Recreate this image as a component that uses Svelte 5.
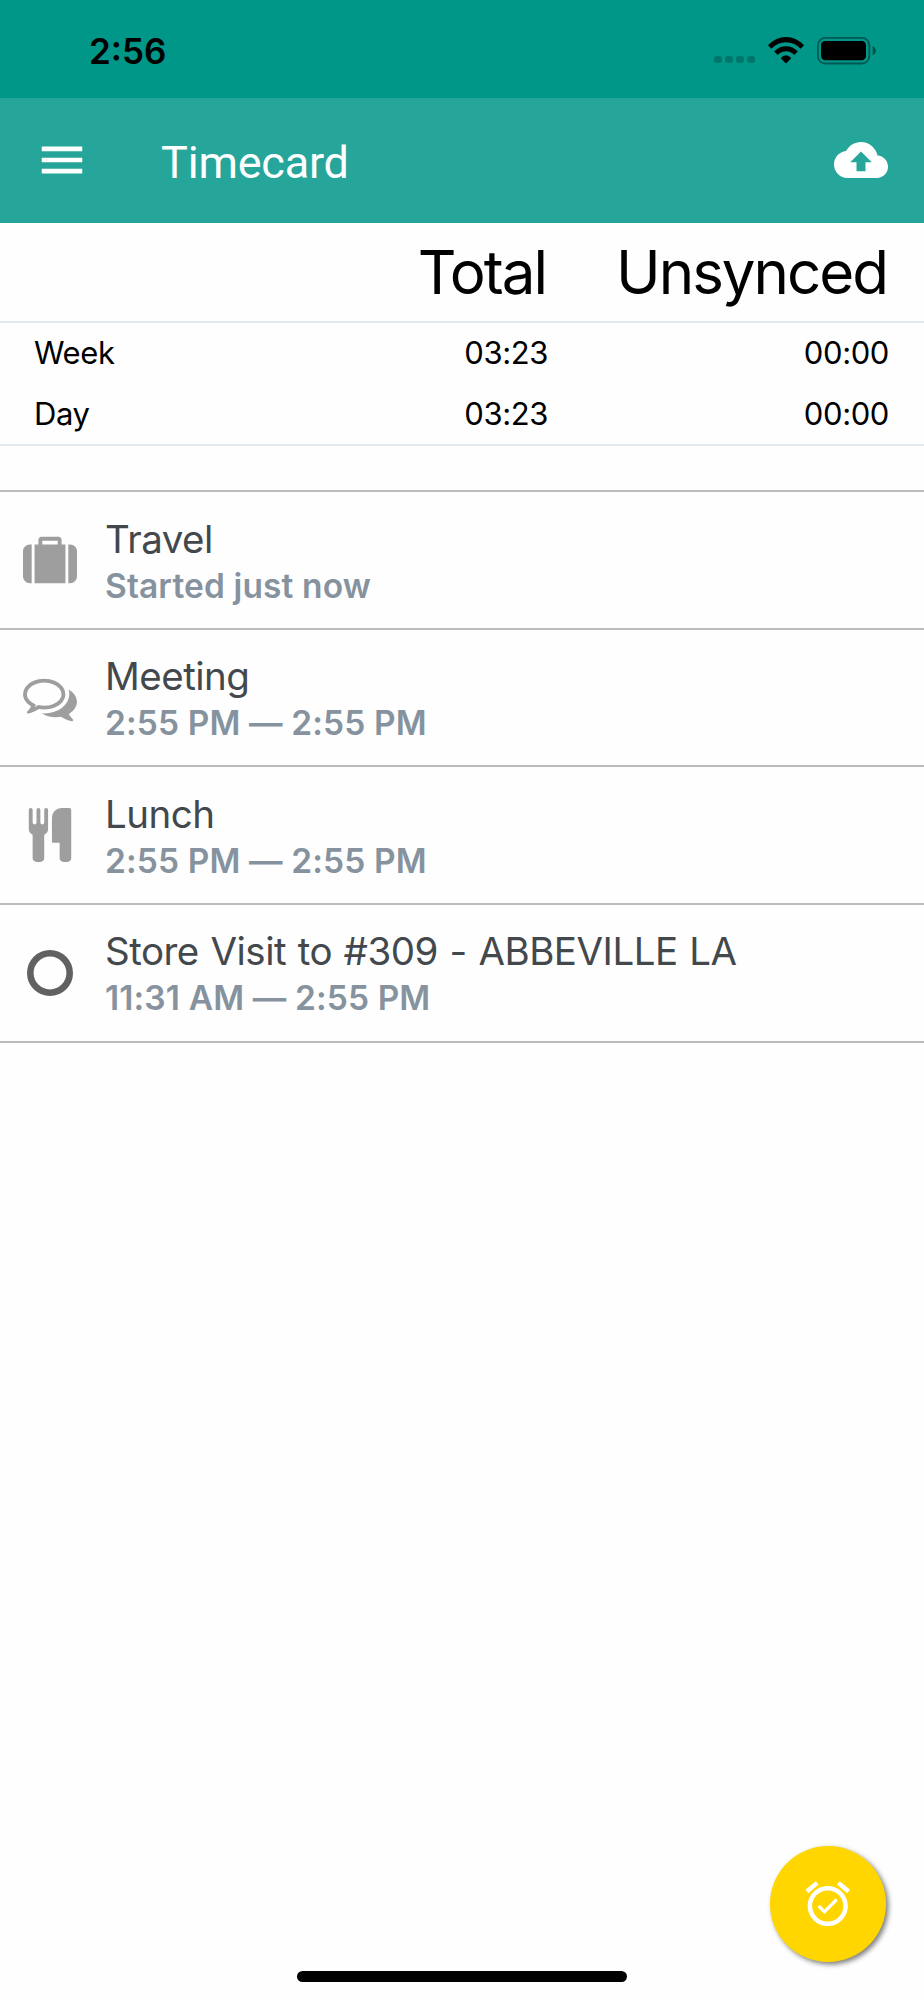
<script lang="ts">
  type Entry = { icon: "travel" | "meeting" | "lunch" | "visit"; title: string; time: string };

  const totals = [
    { label: "Week", total: "03:23", unsynced: "00:00" },
    { label: "Day", total: "03:23", unsynced: "00:00" },
  ];

  const entries: Entry[] = [
    { icon: "travel", title: "Travel", time: "Started just now" },
    { icon: "meeting", title: "Meeting", time: "2:55 PM — 2:55 PM" },
    { icon: "lunch", title: "Lunch", time: "2:55 PM — 2:55 PM" },
    { icon: "visit", title: "Store Visit to #309 - ABBEVILLE LA", time: "11:31 AM — 2:55 PM" },
  ];

  const icons = {
    travel:
      "M640 384h512v-128h-512v128zM288 384v1280h-64q-92 0-158-66t-66-158v-832q0-92 66-158t158-66h64zM1408 384v1280h-1024v-1280h128v-160q0-40 28-68t68-28h576q40 0 68 28t28 68v160h128zM1792 608v832q0 92-66 158t-158 66h-64v-1280h64q92 0 158 66t66 158z",
    meeting:
      "M704 384q-153 0-286 52t-211.5 141-78.5 191q0 82 53 158t149 132l97 56-35 84q34-20 62-39l44-31 53 10q78 14 153 14 153 0 286-52t211.5-141 78.5-191-78.5-191-211.5-141-286-52zm0-128q191 0 353.5 68.5t256.5 186.5 94 257-94 257-256.5 186.5-353.5 68.5q-86 0-176-16-124 88-278 128-36 9-86 16h-3q-11 0-20.5-8t-11.5-21q-1-3-1-6.5t.5-6.5 2-6l2.5-5 3.5-5.5 4-5 4.5-5 4-4.5q5-6 23-25t26-29.5 22.5-29 25-38.5 20.5-44q-124-72-195-177t-71-224q0-139 94-257t256.5-186.5 353.5-68.5zm822 1169q10 24 20.5 44t25 38.5 22.5 29 26 29.5 23 25q1 1 4 4.5t4.5 5 4 5 3.5 5.5l2.5 5 2 6 .5 6.5-1 6.5q-3 14-13 22t-22 7q-50-7-86-16-154-40-278-128-90 16-176 16-271 0-472-132 58 4 88 4 161 0 309-45t264-129q125-92 192-212t67-254q0-77-23-152 129 71 204 178t75 230q0 120-71 224.5t-195 176.5z",
    lunch:
      "M832 64v640q0 61-35.5 111t-92.5 70v779q0 52-38 90t-90 38h-128q-52 0-90-38t-38-90v-779q-57-20-92.5-70t-35.5-111v-640q0-26 19-45t45-19 45 19 19 45v416q0 26 19 45t45 19 45-19 19-45v-416q0-26 19-45t45-19 45 19 19 45v416q0 26 19 45t45 19 45-19 19-45v-416q0-26 19-45t45-19 45 19 19 45zm768 0v1600q0 52-38 90t-90 38h-128q-52 0-90-38t-38-90v-512h-224q-13 0-22.5-9.5t-9.5-22.5v-800q0-132 94-226t226-94h256q26 0 45 19t19 45z",
  };
</script>

<div class="screen">
  <div class="status-bar">
    <span class="clock">2:56</span>
    <div class="indicators">
      <div class="signal"><i></i><i></i><i></i><i></i></div>
      <svg class="wifi" width="36" height="27" viewBox="0 0 36 27">
        <path d="M0 8.3Q8 0 18 0T36 8.3L32.6 11.7Q26 5.3 18 5.3T3.4 11.7z" />
        <path d="M6.2 14.6Q11 9.2 18 9.2T29.8 14.6L26.2 18Q22.8 14.3 18 14.3T9.8 18z" />
        <path d="M12.8 21.2Q15 18.3 18 18.3T23.2 21.2L18.6 26Q18 26.5 17.4 26z" />
      </svg>
      <svg class="battery" width="60" height="28" viewBox="0 0 60 28">
        <rect x="0.9" y="0.9" width="51.4" height="25.6" rx="7.5" fill="none" stroke="#000" stroke-opacity="0.4" stroke-width="1.8" />
        <rect x="4" y="4" width="45" height="19.3" rx="4.2" />
        <path d="M55.6 9.2q3.2 1.4 3.2 4.5t-3.2 4.5z" fill-opacity="0.45" />
      </svg>
    </div>
  </div>

  <header class="toolbar">
    <svg width="54" height="54" viewBox="0 0 24 24" fill="#fff">
      <path d="M3 18h18v-2.1H3V18zm0-4.95h18v-2.1H3v2.1zM3 6v2.1h18V6H3z" />
    </svg>
    <h1>Timecard</h1>
    <svg width="54" height="54" viewBox="0 0 24 24" fill="#fff">
      <path d="M19.35 10.04C18.67 6.59 15.64 4 12 4 9.11 4 6.6 5.64 5.35 8.04 2.34 8.36 0 10.91 0 14c0 3.31 2.69 6 6 6h13c2.76 0 5-2.24 5-5 0-2.64-2.05-4.78-4.65-4.96zM14 13v4h-4v-4H7.2L12 8.2l4.8 4.8H14z" />
    </svg>
  </header>

  <section class="summary">
    <div class="summary-row summary-head">
      <span></span>
      <span>Total</span>
      <span>Unsynced</span>
    </div>
    <div class="summary-body">
      {#each totals as row}
        <div class="summary-row">
          <span class="label">{row.label}</span>
          <span>{row.total}</span>
          <span>{row.unsynced}</span>
        </div>
      {/each}
    </div>
  </section>

  <ul class="entries">
    {#each entries as entry}
      <li class="entry">
        {#if entry.icon === "visit"}
          <svg width="54" height="54" viewBox="0 0 54 54">
            <circle cx="27" cy="27" r="19.7" fill="none" stroke="#616161" stroke-width="6.6" />
          </svg>
        {:else}
          <svg width="54" height="54" viewBox="0 0 1792 1792" fill="#9e9e9e">
            <path d={icons[entry.icon]} />
          </svg>
        {/if}
        <div class="entry-text">
          <span class="title">{entry.title}</span>
          <span class="time">{entry.time}</span>
        </div>
      </li>
    {/each}
  </ul>

  <button class="fab" aria-label="Clock in">
    <svg width="53.5" height="53.5" viewBox="0 0 24 24" fill="#fff">
      <path d="M22 5.72l-4.6-3.86-1.29 1.53 4.6 3.86L22 5.72zM7.88 3.39L6.6 1.86 2 5.71l1.29 1.53 4.59-3.85zM12 4c-4.97 0-9 4.03-9 9s4.02 9 9 9 9-4.03 9-9-4.03-9-9-9zm0 16c-3.87 0-7-3.13-7-7s3.13-7 7-7 7 3.13 7 7-3.13 7-7 7zm-1.46-5.47L8.41 12.4l-1.06 1.06 3.18 3.18 6-6-1.06-1.06-4.93 4.95z" />
    </svg>
  </button>
  <div class="home-indicator"></div>
</div>

<style>
  :global(body) {
    margin: 0;
    background: #fefefe;
  }

  .screen {
    position: relative;
    width: 924px;
    height: 2000px;
    overflow: hidden;
    background: #fefefe;
    font-family: Inter, "Liberation Sans", sans-serif;
    color: #000;
  }

  svg {
    display: block;
    flex: none;
  }

  .status-bar {
    box-sizing: border-box;
    display: flex;
    justify-content: space-between;
    height: 98px;
    padding: 37px 47px 0 89px;
    background: #009688;
  }

  .clock {
    margin-top: -7px;
    font-size: 35px;
    font-weight: 600;
    line-height: 43px;
  }

  .indicators {
    display: flex;
    align-items: flex-start;
  }

  .signal {
    display: flex;
    gap: 3.5px;
    margin: 19px 13px 0 0;
  }

  .signal i {
    width: 7.6px;
    height: 7.4px;
    border-radius: 3px;
    background: rgba(0, 0, 0, 0.22);
  }

  .wifi {
    margin-right: 13px;
  }

  .toolbar {
    box-sizing: border-box;
    display: flex;
    align-items: center;
    height: 125px;
    padding: 0 36px 1px 35px;
    background: #26a69a;
  }

  .toolbar h1 {
    flex: 1;
    margin: 6px 0 0 72px;
    font-family: Roboto, sans-serif;
    font-size: 45px;
    font-weight: 400;
    line-height: 54px;
    letter-spacing: -0.2px;
    color: #fff;
  }

  .summary-row {
    box-sizing: border-box;
    display: grid;
    grid-template-columns: 1fr auto 341px;
    align-items: center;
    height: 60.5px;
    padding: 0 35px 1px 34px;
    font-size: 31px;
    letter-spacing: -0.4px;
    text-align: right;
  }

  .summary-row .label {
    text-align: left;
  }

  .summary-head {
    height: 100px;
    padding-right: 37px;
    padding-bottom: 0;
    border-bottom: 2px solid #e1e8ee;
    font-size: 60px;
    letter-spacing: -2px;
  }

  .summary-body {
    border-bottom: 2px solid #e1e8ee;
  }

  .entries {
    margin: 44.3px 0 0;
    padding: 0;
    list-style: none;
    border-top: 2px solid #bbb;
  }

  .entry {
    box-sizing: border-box;
    display: flex;
    align-items: center;
    height: 137.6px;
    padding-left: 23px;
    border-bottom: 2px solid #bbb;
  }

  .entry-text {
    display: flex;
    flex-direction: column;
    margin: 4px 0 0 28px;
  }

  .title {
    font-size: 38.5px;
    line-height: 47px;
    letter-spacing: -0.5px;
    word-spacing: 1.3px;
    color: #43484d;
  }

  .time {
    font-size: 33.5px;
    font-weight: 600;
    line-height: 46px;
    letter-spacing: 0.12px;
    color: #86939e;
  }

  .fab {
    position: absolute;
    right: 38px;
    bottom: 38px;
    display: flex;
    align-items: center;
    justify-content: center;
    width: 116px;
    height: 116px;
    padding: 0 1px 1px 0;
    border: 0;
    border-radius: 50%;
    background: #ffd600;
    box-shadow: 2.5px 2.5px 5px rgba(0, 0, 0, 0.5);
  }

  .home-indicator {
    position: absolute;
    left: 297px;
    bottom: 18px;
    width: 330px;
    height: 11px;
    border-radius: 6px;
    background: #000;
  }
</style>
